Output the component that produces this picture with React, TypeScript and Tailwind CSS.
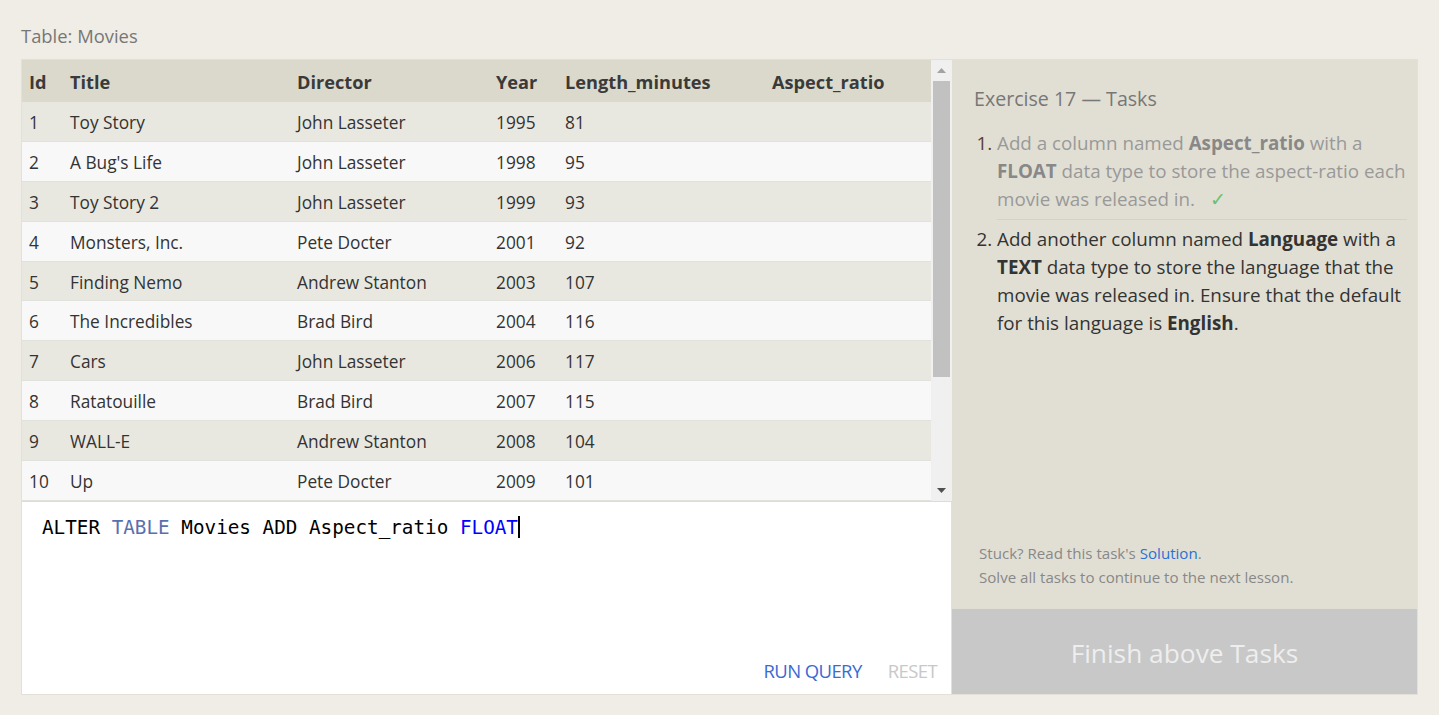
import React from "react";

const movies = [
  [1, "Toy Story", "John Lasseter", 1995, 81],
  [2, "A Bug's Life", "John Lasseter", 1998, 95],
  [3, "Toy Story 2", "John Lasseter", 1999, 93],
  [4, "Monsters, Inc.", "Pete Docter", 2001, 92],
  [5, "Finding Nemo", "Andrew Stanton", 2003, 107],
  [6, "The Incredibles", "Brad Bird", 2004, 116],
  [7, "Cars", "John Lasseter", 2006, 117],
  [8, "Ratatouille", "Brad Bird", 2007, 115],
  [9, "WALL-E", "Andrew Stanton", 2008, 104],
  [10, "Up", "Pete Docter", 2009, 101],
];

const cols = ["w-[41px]", "w-[227px]", "w-[199px]", "w-[69px]", "w-[207px]", "flex-1"];

export default function App() {
  return (
    <div className="min-h-[715px] bg-[#efede5] px-[21px] pt-[24px] pb-[20px] text-[#333]" style={{ fontFamily: '"Open Sans", sans-serif' }}>
      <div className="text-[18.4px] text-[#777] leading-[24px] h-[35px]">Table: Movies</div>

      <div className="flex h-[636px] border border-[#e2e0d8]">
        {/* left: table + editor */}
        <div className="flex flex-col w-[930px]">
          <div className="flex h-[442px] border-b border-[#dcdcdc]">
            <div className="flex-1 flex flex-col text-[17.3px]">
              <div className="flex h-[42px] items-center pt-[3px] bg-[#dad9cc] font-bold text-[#3a3a3a] text-[18.2px]">
                {["Id", "Title", "Director", "Year", "Length_minutes", "Aspect_ratio"].map((h, i) => (
                  <div key={h} className={`${cols[i]} pl-[7px]`}>{h}</div>
                ))}
              </div>
              {movies.map((m, idx) => (
                <div key={idx} className={`flex h-[40px] items-center pt-[3px] border-b border-[#e2e2dc] ${idx % 2 === 0 ? "bg-[#e9e8e0]" : "bg-[#f8f8f8]"}`}>
                  {[...m, ""].map((c, i) => (
                    <div key={i} className={`${cols[i]} pl-[7px]`}>{c}</div>
                  ))}
                </div>
              ))}
            </div>
            {/* scrollbar */}
            <div className="w-[21px] bg-[#f0f0f0] flex flex-col items-center">
              <div className="h-[21px] flex items-center justify-center">
                <svg width="9" height="5" viewBox="0 0 9 5"><path d="M4.5 0 L9 5 L0 5 Z" fill="#a3a3a3" /></svg>
              </div>
              <div className="w-[17px] h-[296px] bg-[#c1c1c1]" />
              <div className="flex-1" />
              <div className="h-[21px] flex items-center justify-center">
                <svg width="9" height="5" viewBox="0 0 9 5"><path d="M0 0 L9 0 L4.5 5 Z" fill="#505050" /></svg>
              </div>
            </div>
          </div>

          <div className="flex-1 bg-white flex flex-col border-r border-[#e2e0d8]">
            <div className="pl-[20px] pt-[14px] text-[19.3px] text-black leading-[24px]" style={{ fontFamily: '"DejaVu Sans Mono", monospace' }}>
              ALTER <span className="text-[#5a70ad]">TABLE</span> Movies ADD Aspect_ratio <span className="text-[#0000ff]">FLOAT</span>
              <span className="inline-block w-[2px] h-[22px] bg-black align-middle -mt-[3px]" />
            </div>
            <div className="flex-1" />
            <div className="flex justify-end gap-[26px] pr-[14px] pb-[9px] text-[18.5px] tracking-[-0.6px]">
              <span className="text-[#3b6ad4]">RUN QUERY</span>
              <span className="text-[#c8c8c8]">RESET</span>
            </div>
          </div>
        </div>

        {/* right: tasks */}
        <div className="flex-1 flex flex-col bg-[#e1dfd4]">
          <div className="flex-1 flex flex-col pl-[22px] pr-[10px]">
            <div className="pt-[26px] text-[19.6px] text-[#777] leading-[26px]">Exercise 17 — Tasks</div>
            <ol className="mt-[17px] text-[18.8px] leading-[28px] list-decimal pl-[23px]">
              <li className="text-[#999] marker:text-[#5a4038] pb-[6px] border-b border-[#d4d2c8]">
                Add a column named <b className="text-[#888]">Aspect_ratio</b> with a <b className="text-[#888]">FLOAT</b> data type to store the aspect-ratio each movie was released in. <span className="text-[#6cc070] ml-[10px]">✓</span>
              </li>
              <li className="text-[#333] pt-[5px]">
                Add another column named <b>Language</b> with a <b>TEXT</b> data type to store the language that the movie was released in. Ensure that the default for this language is <b>English</b>.
              </li>
            </ol>
            <div className="flex-1" />
            <div className="pl-[5px] pb-[20px] text-[15.1px] leading-[24px] text-[#888]">
              <div>Stuck? Read this task's <span className="text-[#2a6fd6]">Solution</span>.</div>
              <div>Solve all tasks to continue to the next lesson.</div>
            </div>
          </div>
          <div className="h-[85px] pt-[4px] bg-[#c8c8c8] flex items-center justify-center text-[26.3px] text-[#eeeeee]">
            Finish above Tasks
          </div>
        </div>
      </div>
    </div>
  );
}
